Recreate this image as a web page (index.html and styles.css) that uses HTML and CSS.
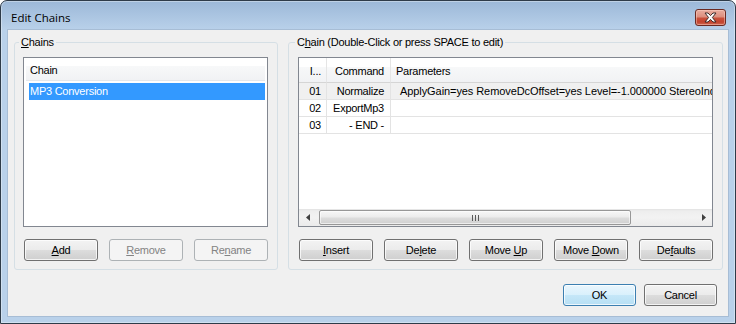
FILE: index.html
```html
<!DOCTYPE html>
<html lang="en">
<head>
<meta charset="utf-8">
<title>Edit Chains</title>
<link rel="stylesheet" href="styles.css">
</head>
<body>
<div class="window">
  <div class="titlebar">
    <span class="title">Edit Chains</span>
    <button class="close" aria-label="Close">
      <svg width="29" height="15" viewBox="0 0 29 15"><polygon points="9,3 12,3 14.5,5.6 17,3 20,3 16.4,7.5 20,12 17,12 14.5,9.4 12,12 9,12 12.6,7.5" fill="#fff" stroke="#3e2c2a" stroke-width="1" stroke-linejoin="round"/></svg>
    </button>
  </div>
  <div class="client">
    <div class="groups">
      <fieldset class="group group-left">
        <legend><u>C</u>hains</legend>
        <div class="gbody">
          <div class="listbox">
            <div class="lheader">Chain</div>
            <div class="litem">MP3 Conversion</div>
          </div>
          <div class="btnrow">
            <button class="btn"><u>A</u>dd</button>
            <button class="btn" disabled><u>R</u>emove</button>
            <button class="btn" disabled>Re<u>n</u>ame</button>
          </div>
        </div>
      </fieldset>
      <fieldset class="group group-right">
        <legend>C<u>h</u>ain (Double-Click or press SPACE to edit)</legend>
        <div class="gbody">
          <div class="table">
            <div class="grid">
              <div class="cell h num">I...</div>
              <div class="cell h cmd">Command</div>
              <div class="cell h par">Parameters</div>

              <div class="cell sel num">01</div>
              <div class="cell sel cmd">Normalize</div>
              <div class="cell sel par val">ApplyGain=yes RemoveDcOffset=yes Level=-1.000000 StereoIndependent=no</div>

              <div class="cell num">02</div>
              <div class="cell cmd">ExportMp3</div>
              <div class="cell par val"></div>

              <div class="cell num">03</div>
              <div class="cell cmd">- END -</div>
              <div class="cell par val"></div>
            </div>
            <div class="hscroll">
              <span class="sarrow"><svg width="4" height="7" viewBox="0 0 4 7"><polygon points="4,0 4,7 0,3.5" fill="#404040"/></svg></span>
              <span class="strack">
                <span class="thumb"><svg width="7" height="6" viewBox="0 0 7 6"><path d="M0.5 0v6M3.5 0v6M6.5 0v6" stroke="#5a5a5a" stroke-width="1"/></svg></span>
              </span>
              <span class="sarrow"><svg width="4" height="7" viewBox="0 0 4 7"><polygon points="0,0 0,7 4,3.5" fill="#404040"/></svg></span>
            </div>
          </div>
          <div class="btnrow">
            <button class="btn"><u>I</u>nsert</button>
            <button class="btn">De<u>l</u>ete</button>
            <button class="btn">Move <u>U</u>p</button>
            <button class="btn">Move <u>D</u>own</button>
            <button class="btn">De<u>f</u>aults</button>
          </div>
        </div>
      </fieldset>
    </div>
    <div class="dlgbtns">
      <button class="btn dlg default">OK</button>
      <button class="btn dlg">Cancel</button>
    </div>
  </div>
</div>
</body>
</html>
```

FILE: styles.css
```css
html, body {
  margin: 0;
  padding: 0;
}

body {
  width: 736px;
  height: 324px;
  overflow: hidden;
  background: #ffffff;
  font-family: "Liberation Sans", Arial, sans-serif;
  font-size: 11px;
  letter-spacing: -0.25px;
  color: #000;
}

.window {
  box-sizing: border-box;
  width: 736px;
  height: 324px;
  border: 1px solid #2e3b49;
  border-radius: 7px 7px 0 0;
  background: linear-gradient(#9cb8d8 0, #b9d1ea 29px, #b9d1ea 100%);
  padding: 0 7px 7px;
  display: flex;
  flex-direction: column;
  overflow: hidden;
  box-shadow: inset 0 0 0 1px rgba(255, 255, 255, 0.35);
}

.titlebar {
  height: 29px;
  margin: 0 -7px;
  padding: 0 9px 0 10px;
  display: flex;
  justify-content: space-between;
  align-items: flex-start;
}

.title {
  font-family: "Open Sans", "Noto Sans", sans-serif;
  font-size: 11.5px;
  letter-spacing: 0;
  line-height: 16px;
  margin-top: 9px;
  color: #000;
}

.close {
  width: 31px;
  height: 17px;
  margin-top: 8px;
  padding: 0;
  box-sizing: border-box;
  border: 1px solid #6b2a22;
  border-radius: 3px;
  background: linear-gradient(#e9ad9f 0%, #dd8f7f 45%, #c9503b 55%, #c2432e 80%, #d06a54 100%);
  box-shadow: inset 0 0 0 1px rgba(255, 215, 205, 0.45);
  display: flex;
}

.close svg {
  display: block;
}

.client {
  flex: 1;
  background: #f0f0f0;
  padding: 6px 5px 0 6px;
  display: flex;
  flex-direction: column;
  box-shadow: 0 0 0 1px #a7bdd5;
}

.groups {
  display: flex;
  gap: 10px;
}

.group {
  margin: 0;
  box-sizing: border-box;
  min-width: 0;
  border: 1px solid #d5dfe5;
  border-radius: 3px;
}

.group legend {
  padding: 0 2px;
  line-height: 13px;
  margin-left: -4px;
}

.group-left {
  width: 264px;
  padding: 8px 9px 8px 8px;
}

.group-right {
  width: 435px;
  padding: 8px 9px 8px 9px;
}

.group-right legend {
  margin-left: -3px;
}

.gbody {
  display: flex;
  flex-direction: column;
  gap: 12px;
}

.listbox {
  height: 170px;
  box-sizing: border-box;
  border: 1px solid #828790;
  background: #fff;
  padding: 0 2px;
}

.lheader {
  height: 23px;
  box-sizing: border-box;
  background: linear-gradient(#ffffff 0, #ffffff 38%, #f7f8f9 38%, #f1f2f4 100%);
  border-bottom: 1px solid #e4e7eb;
  padding: 3px 0 0 4px;
  line-height: 19px;
}

.litem {
  margin: 2px 0 0 3px;
  height: 17px;
  line-height: 17px;
  background: #3399ff;
  color: #fff;
  padding-left: 1px;
}

.btnrow {
  display: flex;
  justify-content: space-between;
  padding-left: 1px;
}

.btn {
  width: 74px;
  height: 22px;
  box-sizing: border-box;
  padding: 0;
  border: 1px solid #707070;
  border-radius: 3px;
  background: linear-gradient(#f3f3f3 0%, #ebebeb 50%, #dddddd 50%, #cfcfcf 100%);
  box-shadow: inset 0 0 0 1px rgba(255, 255, 255, 0.75);
  font-family: inherit;
  font-size: 11px;
  letter-spacing: -0.25px;
  line-height: 20px;
  color: #000;
  text-align: center;
}

.btn:disabled {
  border-color: #adb2b5;
  background: #f4f4f4;
  box-shadow: none;
  color: #838383;
}

.table {
  height: 170px;
  box-sizing: border-box;
  border: 1px solid #828790;
  background: #fff;
  display: flex;
  flex-direction: column;
}

.grid {
  flex: 1;
  display: grid;
  grid-template-columns: 28px 64px 1fr;
  grid-template-rows: 25px repeat(3, 17px);
  align-content: start;
  overflow: hidden;
  min-height: 0;
}

.cell {
  box-sizing: border-box;
  border-right: 1px solid #e3e3e3;
  border-bottom: 1px solid #e3e3e3;
  white-space: nowrap;
  overflow: hidden;
  padding-top: 1px;
  line-height: 15px;
}

.cell.h {
  background: linear-gradient(#ffffff 0, #ffffff 38%, #f7f8f9 38%, #f1f2f4 100%);
  border-right-color: #e5e5e5;
  border-bottom-color: #d5d5d5;
  padding-top: 3px;
  line-height: 20px;
}

.cell.sel {
  background: #f0f0f0;
}

.num {
  text-align: right;
  padding-right: 5px;
}

.cmd {
  text-align: right;
  padding-right: 6px;
}

.par {
  border-right: none;
  padding-left: 5px;
}

.par.val {
  padding-left: 9px;
  letter-spacing: -0.08px;
}

.hscroll {
  height: 17px;
  flex: none;
  display: flex;
  background: linear-gradient(#e2e2e2 0, #eeeeee 2px, #f2f2f2 50%, #ebebeb 100%);
}

.sarrow {
  width: 17px;
  display: flex;
  align-items: center;
  justify-content: center;
}

.sarrow svg {
  display: block;
}

.strack {
  flex: 1;
  display: flex;
  align-items: center;
  padding-left: 3px;
}

.thumb {
  width: 312px;
  height: 15px;
  box-sizing: border-box;
  border: 1px solid #979797;
  border-radius: 2px;
  background: linear-gradient(#f7f7f7 0%, #ececec 45%, #dcdcdc 55%, #d0d0d0 100%);
  box-shadow: inset 0 0 0 1px rgba(255, 255, 255, 0.6);
  display: flex;
  align-items: center;
  justify-content: center;
}

.thumb svg {
  display: block;
}

.dlgbtns {
  display: flex;
  justify-content: flex-end;
  gap: 8px;
  margin-top: 14px;
  padding-right: 6px;
}

.btn.dlg {
  width: 73px;
}

.btn.default {
  border-color: #3c7fb1;
  background: linear-gradient(#eaf6fd 0%, #d9f0fc 50%, #c6e7f8 50%, #b7dff4 100%);
}
```
